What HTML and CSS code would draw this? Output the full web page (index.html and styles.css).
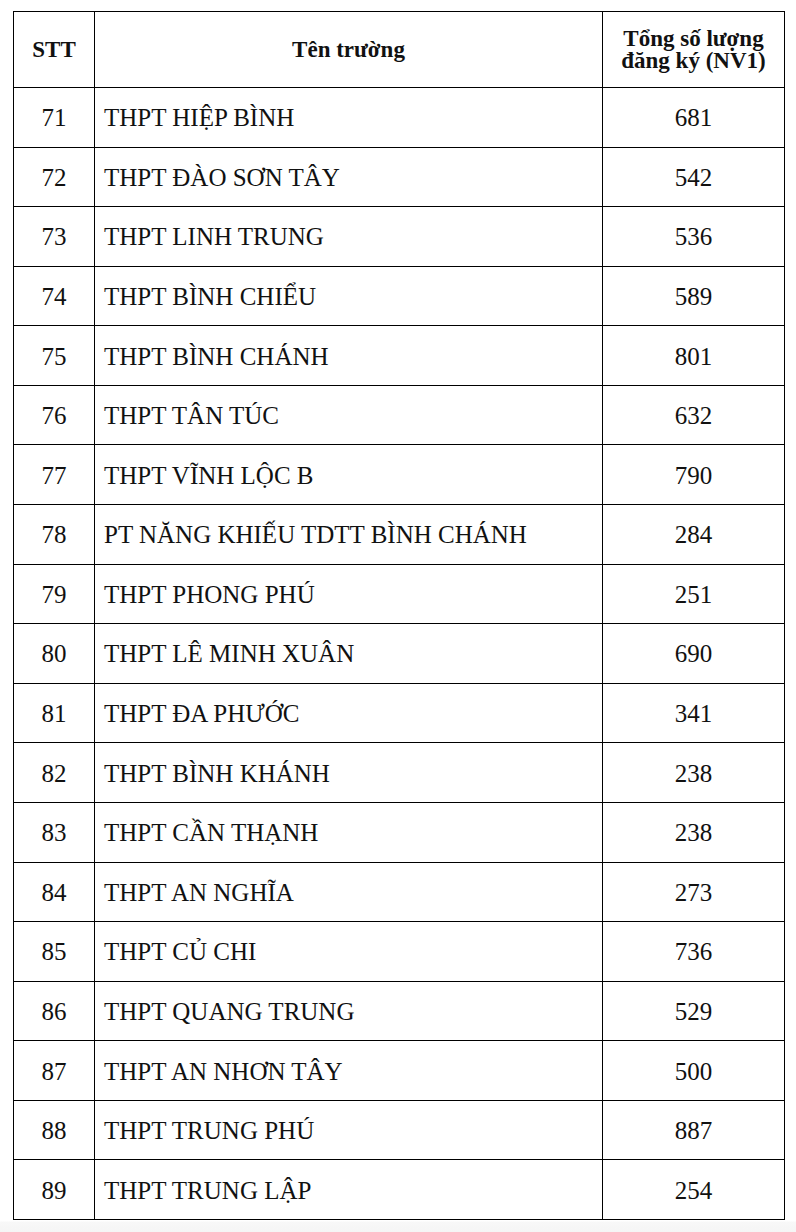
FILE: index.html
```html
<!DOCTYPE html>
<html lang="vi">
<head>
<meta charset="utf-8">
<title>Bảng đăng ký NV1</title>
<link rel="stylesheet" href="styles.css">
</head>
<body>
<div class="page">
<table class="reg">
  <colgroup>
    <col class="c-stt">
    <col class="c-name">
    <col class="c-total">
  </colgroup>
  <thead>
    <tr>
      <th>STT</th>
      <th>Tên trường</th>
      <th><span class="hl">Tổng số lượng</span><span class="hl">đăng ký (NV1)</span></th>
    </tr>
  </thead>
  <tbody>
    <tr><td>71</td><td class="name">THPT HIỆP BÌNH</td><td>681</td></tr>
    <tr><td>72</td><td class="name">THPT ĐÀO SƠN TÂY</td><td>542</td></tr>
    <tr><td>73</td><td class="name">THPT LINH TRUNG</td><td>536</td></tr>
    <tr><td>74</td><td class="name">THPT BÌNH CHIỂU</td><td>589</td></tr>
    <tr><td>75</td><td class="name">THPT BÌNH CHÁNH</td><td>801</td></tr>
    <tr><td>76</td><td class="name">THPT TÂN TÚC</td><td>632</td></tr>
    <tr><td>77</td><td class="name">THPT VĨNH LỘC B</td><td>790</td></tr>
    <tr><td>78</td><td class="name">PT NĂNG KHIẾU TDTT BÌNH CHÁNH</td><td>284</td></tr>
    <tr><td>79</td><td class="name">THPT PHONG PHÚ</td><td>251</td></tr>
    <tr><td>80</td><td class="name">THPT LÊ MINH XUÂN</td><td>690</td></tr>
    <tr><td>81</td><td class="name">THPT ĐA PHƯỚC</td><td>341</td></tr>
    <tr><td>82</td><td class="name">THPT BÌNH KHÁNH</td><td>238</td></tr>
    <tr><td>83</td><td class="name">THPT CẦN THẠNH</td><td>238</td></tr>
    <tr><td>84</td><td class="name">THPT AN NGHĨA</td><td>273</td></tr>
    <tr><td>85</td><td class="name">THPT CỦ CHI</td><td>736</td></tr>
    <tr><td>86</td><td class="name">THPT QUANG TRUNG</td><td>529</td></tr>
    <tr><td>87</td><td class="name">THPT AN NHƠN TÂY</td><td>500</td></tr>
    <tr><td>88</td><td class="name">THPT TRUNG PHÚ</td><td>887</td></tr>
    <tr><td>89</td><td class="name">THPT TRUNG LẬP</td><td>254</td></tr>
  </tbody>
</table>
</div>
</body>
</html>
```

FILE: styles.css
```css
html, body {
  margin: 0;
  padding: 0;
}
body {
  background: linear-gradient(#ffffff 0, #ffffff 1221px, #f8f8f8 1222px, #f5f5f5 100%);
  min-height: 1232px;
  font-family: "Liberation Serif", "Times New Roman", serif;
  color: #111;
}
.page {
  padding: 11px 0 0 13px;
}
.reg {
  border-collapse: collapse;
  table-layout: fixed;
  width: 771px;
  border: 1.5px solid #000;
}
.c-stt { width: 81px; }
.c-name { width: 508px; }
.c-total { width: 182px; }
.reg th, .reg td {
  border: 1.5px solid #000;
  padding: 0;
  text-align: center;
  vertical-align: middle;
}
.reg th {
  height: 75px;
  font-size: 23px;
  font-weight: bold;
  line-height: 22px;
}
.reg th .hl {
  display: block;
}
.reg td {
  height: 56.58px;
  padding-top: 2px;
  font-size: 25px;
  line-height: 28px;
}
.reg td.name {
  text-align: left;
  padding-left: 9px;
}
```
